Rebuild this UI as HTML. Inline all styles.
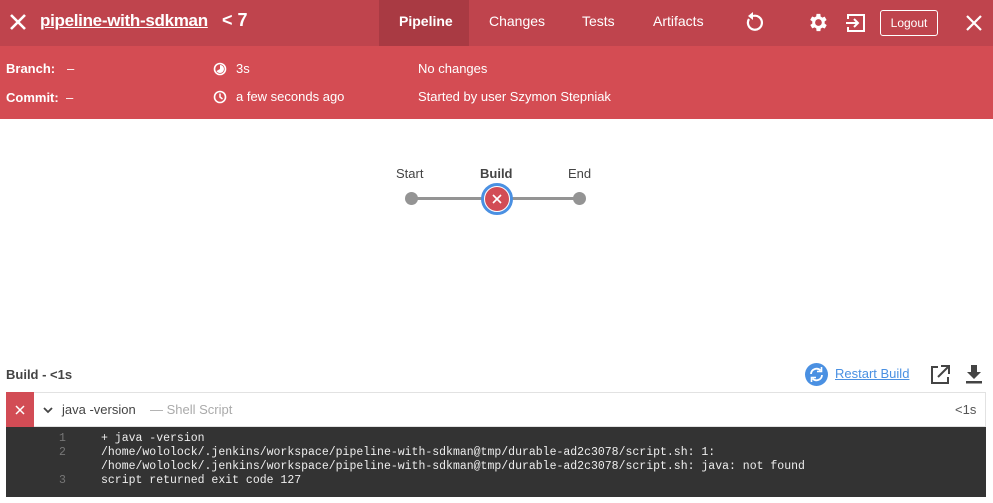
<!DOCTYPE html>
<html><head><style>
*{margin:0;padding:0;box-sizing:border-box}
body{width:993px;height:503px;overflow:hidden;background:#fff;font-family:"Liberation Sans",sans-serif;position:relative;color:#333}
.a{position:absolute;white-space:nowrap}
.top{position:absolute;left:0;top:0;width:993px;height:46px;background:#bf444d}
.sub{position:absolute;left:0;top:46px;width:993px;height:73px;background:#d44c53}
.w{color:#fff}
.mono{font-family:"Liberation Mono",monospace;font-size:11.5px}
</style></head><body>
<div class="top"></div>
<div class="a" style="left:379px;top:0;width:90px;height:46px;background:#a93a43"></div>
<svg class="a" style="left:9px;top:13px" width="18" height="18"><path d="M2 2L16 16M16 2L2 16" stroke="#fff" stroke-width="2.6"/></svg>
<div class="a w" style="left:40px;top:11px;font-size:17px;font-weight:bold;text-decoration:underline;letter-spacing:-0.3px">pipeline-with-sdkman</div>
<div class="a w" style="left:222px;top:10px;font-size:18px;font-weight:bold">&lt; 7</div>
<div class="a w" style="left:399px;top:13px;font-size:14px;font-weight:bold">Pipeline</div>
<div class="a w" style="left:489px;top:13px;font-size:14px">Changes</div>
<div class="a w" style="left:582px;top:13px;font-size:14px">Tests</div>
<div class="a w" style="left:653px;top:13px;font-size:14px">Artifacts</div>
<svg class="a" style="left:743px;top:12px" width="20" height="20" viewBox="0 0 20 20"><path d="M6 7A7 7 0 1 0 10 4" fill="none" stroke="#fff" stroke-width="2.2"/><path d="M10 0L10 8L5 4Z" fill="#fff"/></svg>
<svg class="a" style="left:806px;top:11px" width="23" height="23" viewBox="0 0 24 24"><path fill="#fff" d="M19.4 13a7.5 7.5 0 0 0 0-2l2.1-1.6-2-3.5-2.5 1a7 7 0 0 0-1.7-1L15 3h-4l-.4 2.7a7 7 0 0 0-1.7 1l-2.5-1-2 3.5L6.6 11a7.5 7.5 0 0 0 0 2l-2.1 1.6 2 3.5 2.5-1a7 7 0 0 0 1.7 1L11 21h4l.4-2.7a7 7 0 0 0 1.7-1l2.5 1 2-3.5zM13 15.5a3.5 3.5 0 1 1 0-7 3.5 3.5 0 0 1 0 7z"/></svg>
<svg class="a" style="left:846px;top:13px" width="20" height="20" viewBox="0 0 20 20"><path d="M2 6V2h16v16H2v-4" fill="none" stroke="#fff" stroke-width="2"/><path d="M0 10h11M8 6l4 4-4 4" fill="none" stroke="#fff" stroke-width="2"/></svg>
<div class="a w" style="left:880px;top:10px;width:58px;height:26px;border:1px solid #fff;border-radius:3px;font-size:12px;text-align:center;line-height:24px">Logout</div>
<svg class="a" style="left:966px;top:15px" width="16" height="16"><path d="M1 1L15 15M15 1L1 15" stroke="#fff" stroke-width="2.2"/></svg>
<div class="sub"></div>
<div class="a w" style="left:6px;top:61px;font-size:13px;font-weight:bold">Branch:</div>
<div class="a w" style="left:67px;top:61px;font-size:13px">–</div>
<div class="a w" style="left:6px;top:90px;font-size:13px;font-weight:bold">Commit:</div>
<div class="a w" style="left:66px;top:90px;font-size:13px">–</div>
<svg class="a" style="left:213px;top:62px" width="14" height="14"><circle cx="7" cy="7" r="5.5" fill="none" stroke="#fff" stroke-width="1.6"/><path d="M7 7V3A4 4 0 1 1 3.5 9Z" fill="#fff"/></svg>
<div class="a w" style="left:236px;top:61px;font-size:13px">3s</div>
<svg class="a" style="left:213px;top:90px" width="14" height="14"><circle cx="7" cy="7" r="5.5" fill="none" stroke="#fff" stroke-width="1.6"/><path d="M7 3.5V7l2.5 2" fill="none" stroke="#fff" stroke-width="1.5"/></svg>
<div class="a w" style="left:236px;top:89px;font-size:13px">a few seconds ago</div>
<div class="a w" style="left:418px;top:61px;font-size:13px">No changes</div>
<div class="a w" style="left:418px;top:89px;font-size:13px">Started by user Szymon Stepniak</div>

<div class="a" style="left:396px;top:166px;font-size:13px;color:#444">Start</div>
<div class="a" style="left:480px;top:166px;font-size:13px;font-weight:bold;color:#444">Build</div>
<div class="a" style="left:568px;top:166px;font-size:13px;color:#444">End</div>
<div class="a" style="left:412px;top:197px;width:168px;height:3px;background:#949494"></div>
<div class="a" style="left:405px;top:192px;width:13px;height:13px;border-radius:50%;background:#949494"></div>
<div class="a" style="left:573px;top:192px;width:13px;height:13px;border-radius:50%;background:#949494"></div>
<div class="a" style="left:481px;top:183px;width:32px;height:32px;border-radius:50%;background:#fff;border:3px solid #4a90e2"></div>
<div class="a" style="left:485px;top:187px;width:24px;height:24px;border-radius:50%;background:#d24c55"></div>
<svg class="a" style="left:492px;top:194px" width="10" height="10"><path d="M1 1L9 9M9 1L1 9" stroke="#fff" stroke-width="1.6"/></svg>

<div class="a" style="left:6px;top:367px;font-size:13px;font-weight:bold;color:#444">Build - &lt;1s</div>
<svg class="a" style="left:805px;top:363px" width="23" height="23" viewBox="0 0 23 23"><circle cx="11.5" cy="11.5" r="11.5" fill="#4a90e2"/><path d="M6 11a5.5 5.5 0 0 1 9.5-3.5M17 12a5.5 5.5 0 0 1-9.5 3.5" fill="none" stroke="#fff" stroke-width="1.8"/><path d="M16.5 4v4.5h-4.5M6.5 19v-4.5h4.5" fill="none" stroke="#fff" stroke-width="1.6"/></svg>
<div class="a" style="left:835px;top:366px;font-size:13px;color:#4a90e2;text-decoration:underline">Restart Build</div>
<svg class="a" style="left:930px;top:365px" width="20" height="20" viewBox="0 0 20 20"><path d="M8 2H2v16h16v-6" fill="none" stroke="#444" stroke-width="2"/><path d="M11 1h8v8M18.5 1.5L8 12" fill="none" stroke="#444" stroke-width="2"/></svg>
<svg class="a" style="left:965px;top:365px" width="18" height="19" viewBox="0 0 18 19"><path d="M6 0h6v7h4l-7 7-7-7h4z" fill="#444"/><rect x="1" y="16" width="16" height="2.5" fill="#444"/></svg>

<div class="a" style="left:6px;top:392px;width:980px;height:35px;border:1px solid #e2e2e2;background:#fff"></div>
<div class="a" style="left:6px;top:392px;width:28px;height:35px;background:#d24c55"></div>
<svg class="a" style="left:15px;top:405px" width="10" height="10"><path d="M1 1L9 9M9 1L1 9" stroke="#fff" stroke-width="1.5"/></svg>
<svg class="a" style="left:43px;top:406px" width="10" height="8"><path d="M1 2l4 4 4-4" fill="none" stroke="#444" stroke-width="1.8"/></svg>
<div class="a" style="left:62px;top:402px;font-size:13px;color:#444">java -version</div>
<div class="a" style="left:150px;top:402px;font-size:13px;color:#aaa">— Shell Script</div>
<div class="a" style="left:955px;top:402px;font-size:13px;color:#555">&lt;1s</div>

<div class="a" style="left:6px;top:427px;width:980px;height:70px;background:#333"></div>
<div class="a mono" style="left:59px;top:432px;color:#777;line-height:14px">1<br>2<br><br>3</div>
<div class="a mono" style="left:101px;top:432px;color:#eee;line-height:14px">+ java -version<br>/home/wololock/.jenkins/workspace/pipeline-with-sdkman@tmp/durable-ad2c3078/script.sh: 1:<br>/home/wololock/.jenkins/workspace/pipeline-with-sdkman@tmp/durable-ad2c3078/script.sh: java: not found<br>script returned exit code 127</div>
</body></html>
